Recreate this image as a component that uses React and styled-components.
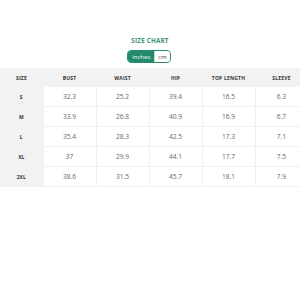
import React from "react";
import styled, { createGlobalStyle } from "styled-components";

const Global = createGlobalStyle`
  html, body { margin: 0; padding: 0; background: #ffffff; }
  body { font-family: "Open Sans", "Liberation Sans", sans-serif; }
`;

const Page = styled.div`
  width: 300px;
  height: 300px;
  overflow: hidden;
  padding-top: 37px;
  box-sizing: border-box;
  display: flex;
  flex-direction: column;
  align-items: center;
`;

const Title = styled.div`
  font-size: 6.3px;
  font-weight: 700;
  color: #3f8f7d;
  letter-spacing: 0.2px;
  line-height: 8px;
`;

const Toggle = styled.div`
  margin-top: 5px;
  display: flex;
  height: 13px;
  border: 1px solid #2a8a6f;
  border-radius: 4px;
  overflow: hidden;
  box-sizing: border-box;
  margin-left: -2px;
`;

const ToggleOpt = styled.div`
  display: flex;
  align-items: center;
  justify-content: center;
  padding: 0 ${(p) => (p.$wide ? 4 : 3)}px;
  font-size: 6px;
  color: ${(p) => (p.$active ? "#ffffff" : "#444")};
  background: ${(p) => (p.$active ? "#238a6d" : "#ffffff")};
  border-left: ${(p) => (p.$active ? "none" : "1px solid #d8d8d8")};
  border-radius: ${(p) => (p.$active ? "0" : "0 3px 3px 0")};
`;

const TableWrap = styled.div`
  margin-top: 5px;
  width: 300px;
  overflow: hidden;
  align-self: flex-start;
`;

const Table = styled.table`
  width: 308px;
  table-layout: fixed;
  border-collapse: collapse;
`;

const Head = styled.th`
  height: 19px;
  padding: 0;
  background: #f2f2f2;
  font-size: 5px;
  font-weight: 700;
  color: #333;
  text-align: center;
  letter-spacing: 0.2px;
  width: ${(p) => (p.$first ? "43px" : "53px")};
`;

const SizeCell = styled.td`
  height: 19px;
  padding: 0;
  background: #f2f2f2;
  font-size: 5px;
  font-weight: 700;
  color: #333;
  text-align: center;
  border-bottom: 1px solid #f2f2f2;
`;

const Cell = styled.td`
  height: 19px;
  padding: 0;
  font-size: 6.6px;
  color: #666;
  text-align: center;
  border: 1px solid #f0f0f0;
  border-top: none;
`;

const cols = ["SIZE", "BUST", "WAIST", "HIP", "TOP LENGTH", "SLEEVE"];
const rows = [
  ["S", "32.3", "25.2", "39.4", "16.5", "6.3"],
  ["M", "33.9", "26.8", "40.9", "16.9", "6.7"],
  ["L", "35.4", "28.3", "42.5", "17.3", "7.1"],
  ["XL", "37", "29.9", "44.1", "17.7", "7.5"],
  ["2XL", "38.6", "31.5", "45.7", "18.1", "7.9"],
];

export default function App() {
  return (
    <>
      <Global />
      <Page>
        <Title>SIZE CHART</Title>
        <Toggle>
          <ToggleOpt $active $wide>inches</ToggleOpt>
          <ToggleOpt>cm</ToggleOpt>
        </Toggle>
        <TableWrap>
          <Table>
            <thead>
              <tr>
                {cols.map((c, i) => (
                  <Head key={c} $first={i === 0}>{c}</Head>
                ))}
              </tr>
            </thead>
            <tbody>
              {rows.map((r) => (
                <tr key={r[0]}>
                  <SizeCell>{r[0]}</SizeCell>
                  {r.slice(1).map((v, i) => (
                    <Cell key={i}>{v}</Cell>
                  ))}
                </tr>
              ))}
            </tbody>
          </Table>
        </TableWrap>
      </Page>
    </>
  );
}
